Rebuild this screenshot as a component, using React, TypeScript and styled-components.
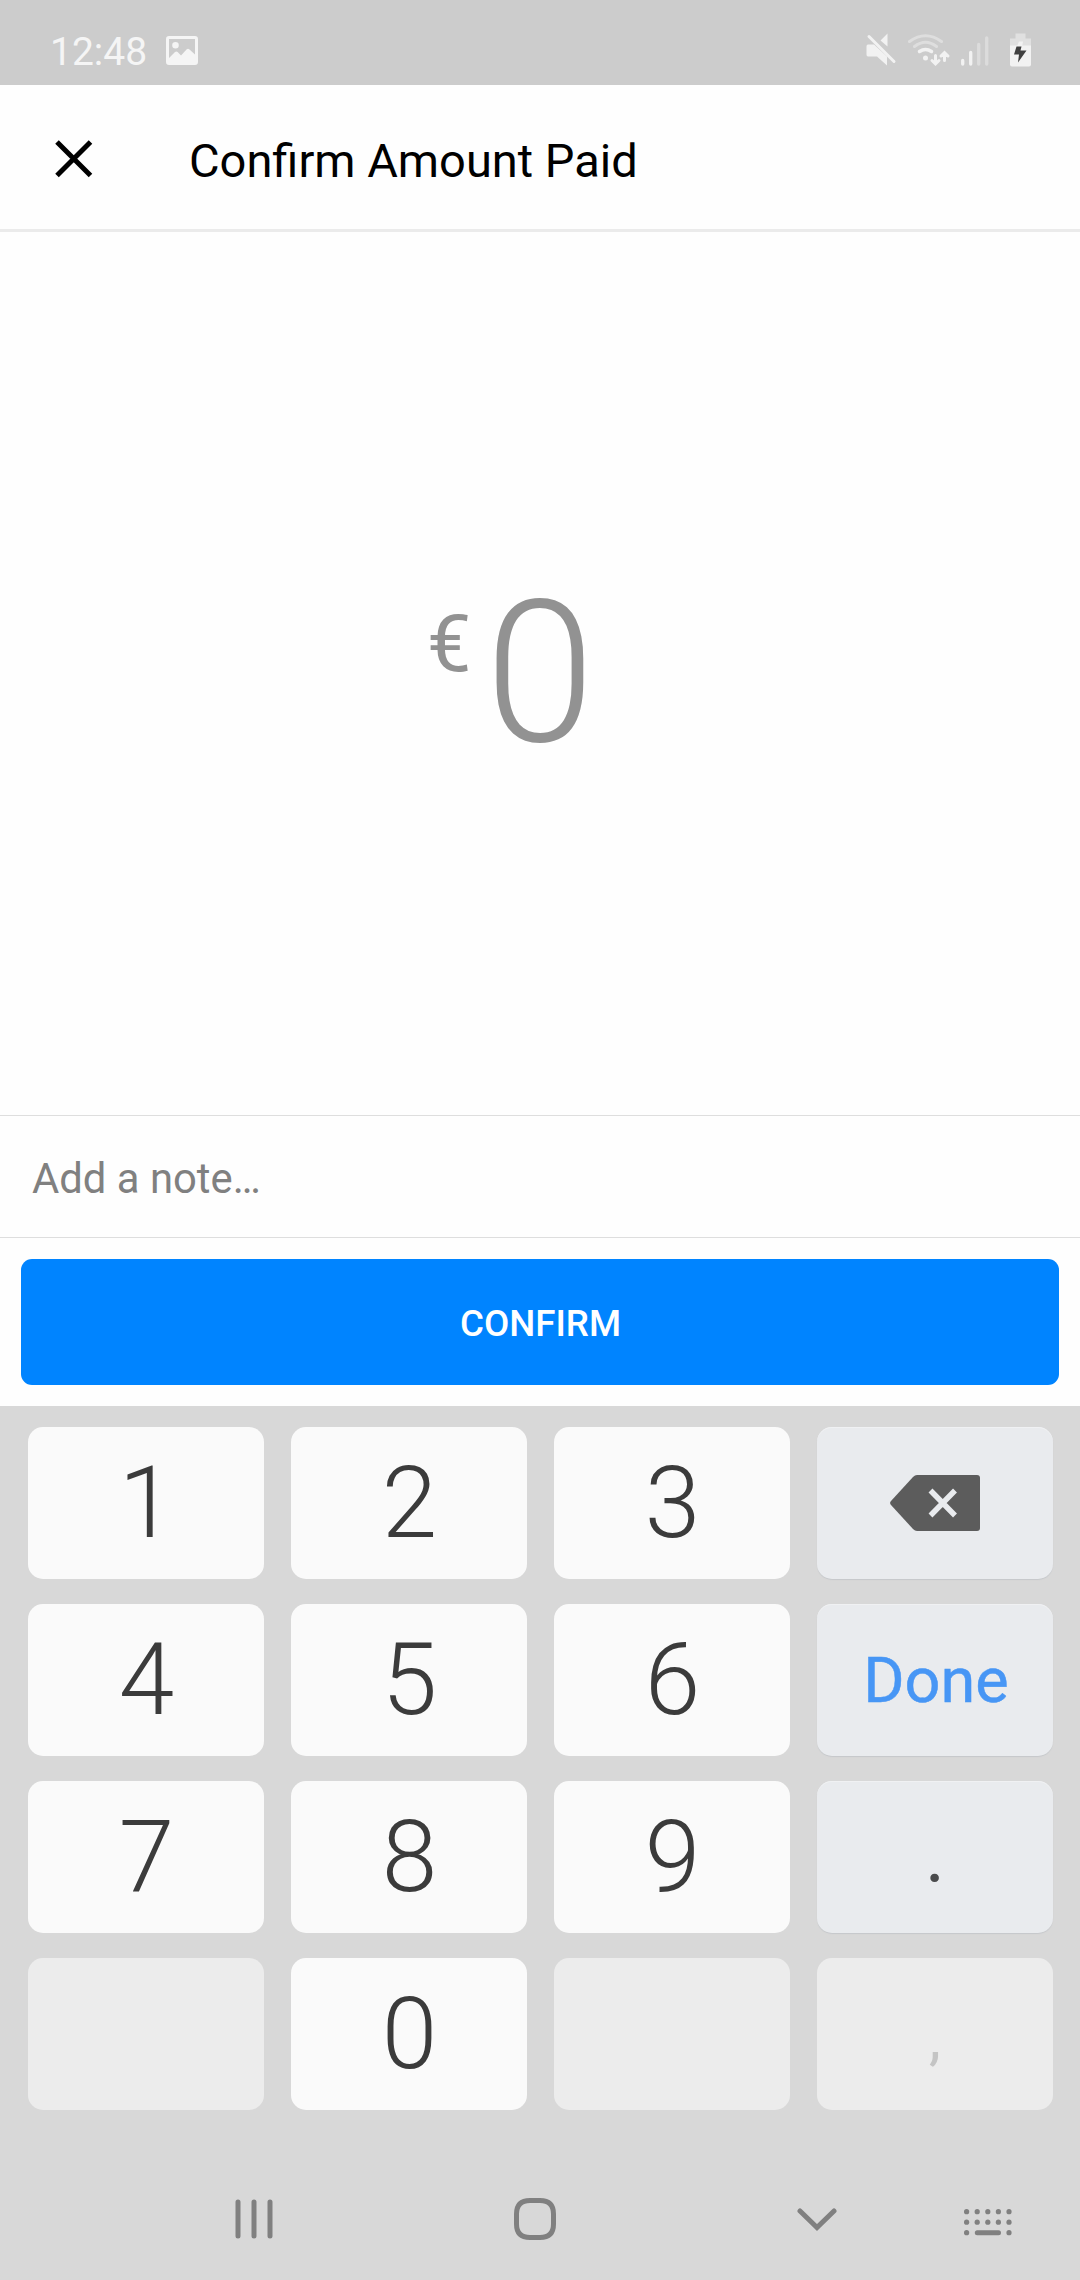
import React from "react";
import styled, { createGlobalStyle, css } from "styled-components";

const Global = createGlobalStyle`
  * { box-sizing: border-box; }
  body { margin: 0; background: #fefefe; }
`;

const Screen = styled.div`
  width: 1080px;
  height: 2280px;
  display: flex;
  flex-direction: column;
  background: #fefefe;
  font-family: Roboto, "Liberation Sans", sans-serif;
  overflow: hidden;
`;

const StatusBar = styled.div`
  height: 85px;
  flex: none;
  display: flex;
  align-items: center;
  justify-content: space-between;
  padding: 17px 48px 0 50px;
  background: #cccccc;
  color: #f5f5f5;
`;

const StatusGroup = styled.div`
  display: flex;
  align-items: center;
`;

const Clock = styled.span`
  font-size: 39px;
  line-height: 46px;
  padding-top: 2px;
  width: 116px;
  white-space: nowrap;
`;

const Header = styled.header`
  height: 147px;
  flex: none;
  display: flex;
  align-items: center;
  border-bottom: 3px solid #ebebeb;
  padding-left: 51px;
`;

const IconButton = styled.button`
  border: 0;
  padding: 0;
  background: none;
  color: inherit;
  display: flex;
`;

const CloseButton = styled(IconButton)`
  margin: 4px 92px 0 0;
`;

const Title = styled.h1`
  margin: 0;
  padding-top: 8px;
  font-size: 47px;
  line-height: 54px;
  font-weight: 400;
  color: #000;
`;

const AmountArea = styled.main`
  flex: 1;
  display: flex;
  align-items: flex-start;
  padding: 341px 0 0 427px;
  color: #929292;
`;

const Currency = styled.span`
  font-size: 79px;
  line-height: 92px;
  padding-top: 25px;
  width: 58px;
`;

const Amount = styled.span`
  font-size: 198px;
  line-height: 200px;
  font-weight: 300;
`;

const NoteRow = styled.div`
  height: 123px;
  flex: none;
  display: flex;
  align-items: center;
  padding: 5px 32px 0;
  border-top: 1px solid #dedede;
  border-bottom: 1px solid #dedede;
  font-size: 41.800px;
  line-height: 50px;
  color: #808080;
`;

const ActionRow = styled.div`
  flex: none;
  display: flex;
  height: 168px;
  padding: 21px;
`;

const ConfirmButton = styled.button`
  flex: 1;
  border: 0;
  border-radius: 11px;
  padding: 3px 0 0 1px;
  background: #0084ff;
  color: #fff;
  font: 500 36.700px/44px Roboto, "Liberation Sans", sans-serif;
`;

const Keyboard = styled.section`
  height: 874px;
  flex: none;
  display: flex;
  flex-direction: column;
  justify-content: space-between;
  background: #d8d8d8;
`;

const Keys = styled.div`
  display: grid;
  grid-template-columns: repeat(4, 236px);
  grid-auto-rows: 152px;
  gap: 25px 27px;
  padding: 21px 28px 0;
`;

type Tone = "digit" | "action" | "done" | "point" | "blank";

const actionSurface = css`
  background: #e9ebee;
  box-shadow: 0 1px 1px #c6c8cb, inset 0 1px 0 #f0f1f3;
`;

const tones = {
  digit: css`
    background: #fafafa;
    color: #3b3b3b;
    font-size: 100px;
    font-weight: 300;
    padding: 0 0 1px 1px;
  `,
  action: actionSurface,
  done: css`
    ${actionSurface}
    color: #4796f5;
    font-size: 63px;
    padding-left: 2px;
    -webkit-text-stroke: 0.5px #4796f5;
  `,
  point: css`
    ${actionSurface}
    color: #4a4b4d;
    font-size: 76px;
    padding-bottom: 5px;
  `,
  blank: css`
    background: #ececec;
    color: #c4c4c4;
    font-size: 60px;
    padding-top: 7px;
  `,
};

const Key = styled.button<{ $tone: Tone }>`
  border: 0;
  border-radius: 15px;
  padding: 0;
  display: flex;
  align-items: center;
  justify-content: center;
  font-family: Roboto, "Liberation Sans", sans-serif;
  font-weight: 400;
  ${(p) => tones[p.$tone]}
`;

const NavBar = styled.nav`
  height: 126px;
  display: flex;
  align-items: center;
  padding: 4px 66px 0 235px;
  color: #808080;
`;

const NavButton = styled(IconButton)<{ $after?: number; $drop?: number }>`
  margin-right: ${(p) => p.$after || 0}px;
  margin-top: ${(p) => p.$drop || 0}px;
`;

const ImageIcon = () => (
  <svg width="32" height="30" viewBox="0 0 32 30">
    <path
      fill="#f5f5f5"
      fillRule="evenodd"
      d="M3 0H29Q32 0 32 3V26Q32 29 29 29H3Q0 29 0 26V3Q0 0 3 0ZM3 3V22L9 16Q10.300 15 11.600 16L15 19.500L20.500 13.500Q22 12 23.500 13.500L29 18.500V3ZM9.500 6A3.300 3.300 0 1 1 9.500 12.600A3.300 3.300 0 1 1 9.500 6Z"
    />
  </svg>
);

const StatusIcons = () => (
  <svg width="166" height="36" viewBox="866 32.500 166 36">
    <path fill="#f2f2f2" d="M868 44H874L887 56V65L877 56H868Q866.500 56 866.500 54V46Q866.500 44 868 44ZM887.500 33V46L880.500 40Z" />
    <path stroke="#f2f2f2" strokeWidth="3" strokeLinecap="round" d="M869 36L894 61" />
    <g fill="none" strokeLinecap="round" strokeWidth="3">
      <path stroke="#dedede" d="M909.500 41Q925.500 29.500 941.500 41M914.500 46Q925.500 37.500 936.500 46" />
      <path stroke="#f2f2f2" strokeWidth="3.500" d="M919.500 51Q925.500 47 931.500 51" />
      <path stroke="#f2f2f2" d="M935.500 55V62.500M932 60L935.500 63.500L939 60M944.500 60V52.500M941 55.500L944.500 52L948 55.500" />
    </g>
    <circle fill="#f2f2f2" cx="925.500" cy="57.500" r="2.500" />
    <g strokeWidth="3.300" strokeLinecap="round">
      <path stroke="#f2f2f2" d="M962.700 60V63.500M970.700 52V63.500" />
      <path stroke="#dcdcdc" d="M978.700 44V63.500M986.700 37.500V63.500" />
    </g>
    <path fill="#e0e0e0" d="M1015.500 33H1025.500V38H1031V46H1010V38H1015.500Z" />
    <path fill="#f2f2f2" d="M1010 45H1031V64Q1031 66 1029 66H1012Q1010 66 1010 64Z" />
    <path fill="#f2f2f2" d="M1017 46L1019 41H1023L1022 46Z" />
    <path fill="#404040" d="M1016.500 46H1021.500L1020.500 50H1026.500L1018 62L1019 54H1014Z" />
  </svg>
);

const CloseIcon = () => (
  <svg width="46" height="44" viewBox="0 0 46 44">
    <path stroke="#000" strokeWidth="5" d="M6 5L39.500 38.500M39.500 5L6 38.500" />
  </svg>
);

const BackspaceIcon = () => (
  <svg width="90" height="56" viewBox="0 0 90 56">
    <path
      fill="#5c5c5c"
      d="M27 0H87Q90 0 90 3V53Q90 56 87 56H27Q25 56 23 54L1 30Q-.8 28 1 26L23 2Q25 0 27 0Z"
    />
    <path stroke="#e9ebee" strokeWidth="5.500" d="M40.500 15.500L65 40.500M65 15.500L40.500 40.500" />
  </svg>
);

const RecentsIcon = () => (
  <svg width="38" height="40" viewBox="0 0 38 40">
    <path stroke="currentColor" strokeWidth="5" strokeLinecap="round" d="M3 3V37M19 3V37M35 3V37" />
  </svg>
);

const HomeIcon = () => (
  <svg width="42" height="42" viewBox="0 0 42 42">
    <path
      fill="none"
      stroke="currentColor"
      strokeWidth="5"
      d="M16 2.500H26Q39.500 2.500 39.500 16V26Q39.500 39.500 26 39.500H16Q2.500 39.500 2.500 26V16Q2.500 2.500 16 2.500Z"
    />
  </svg>
);

const HideIcon = () => (
  <svg width="40" height="24" viewBox="0 0 40 24">
    <path fill="none" stroke="currentColor" strokeWidth="5" strokeLinecap="round" d="M3 3L20 19.500L37 3" />
  </svg>
);

const columns = [2.6, 13.2, 23.8, 34.4, 45];

const KeyboardIcon = () => (
  <svg width="48" height="27" viewBox="0 0 48 27" fill="currentColor">
    {columns.map((x) => (
      <React.Fragment key={x}>
        <circle cx={x} cy="2.700" r="2.600" />
        <circle cx={x} cy="13.200" r="2.600" />
      </React.Fragment>
    ))}
    <circle cx="2.600" cy="23.700" r="2.600" />
    <rect x="10.800" y="21.200" width="26.200" height="5" rx="2.500" />
    <circle cx="45" cy="23.700" r="2.600" />
  </svg>
);

const keys: { label: React.ReactNode; tone: Tone }[] = [
  { label: "1", tone: "digit" },
  { label: "2", tone: "digit" },
  { label: "3", tone: "digit" },
  { label: <BackspaceIcon />, tone: "action" },
  { label: "4", tone: "digit" },
  { label: "5", tone: "digit" },
  { label: "6", tone: "digit" },
  { label: "Done", tone: "done" },
  { label: "7", tone: "digit" },
  { label: "8", tone: "digit" },
  { label: "9", tone: "digit" },
  { label: ".", tone: "point" },
  { label: "", tone: "blank" },
  { label: "0", tone: "digit" },
  { label: "", tone: "blank" },
  { label: ",", tone: "blank" },
];

export default function App() {
  return (
    <>
      <Global />
      <Screen>
        <StatusBar>
          <StatusGroup>
            <Clock>12:48</Clock>
            <ImageIcon />
          </StatusGroup>
          <StatusIcons />
        </StatusBar>
        <Header>
          <CloseButton aria-label="Close">
            <CloseIcon />
          </CloseButton>
          <Title>Confirm Amount Paid</Title>
        </Header>
        <AmountArea>
          <Currency>€</Currency>
          <Amount>0</Amount>
        </AmountArea>
        <NoteRow>Add a note…</NoteRow>
        <ActionRow>
          <ConfirmButton>CONFIRM</ConfirmButton>
        </ActionRow>
        <Keyboard>
          <Keys>
            {keys.map((k, i) => (
              <Key key={i} $tone={k.tone}>
                {k.label}
              </Key>
            ))}
          </Keys>
          <NavBar>
            <NavButton $after={241} aria-label="Recents">
              <RecentsIcon />
            </NavButton>
            <NavButton $after={241} aria-label="Home">
              <HomeIcon />
            </NavButton>
            <NavButton $after={127} $drop={1} aria-label="Hide keyboard">
              <HideIcon />
            </NavButton>
            <NavButton $drop={6} aria-label="Keyboards">
              <KeyboardIcon />
            </NavButton>
          </NavBar>
        </Keyboard>
      </Screen>
    </>
  );
}
